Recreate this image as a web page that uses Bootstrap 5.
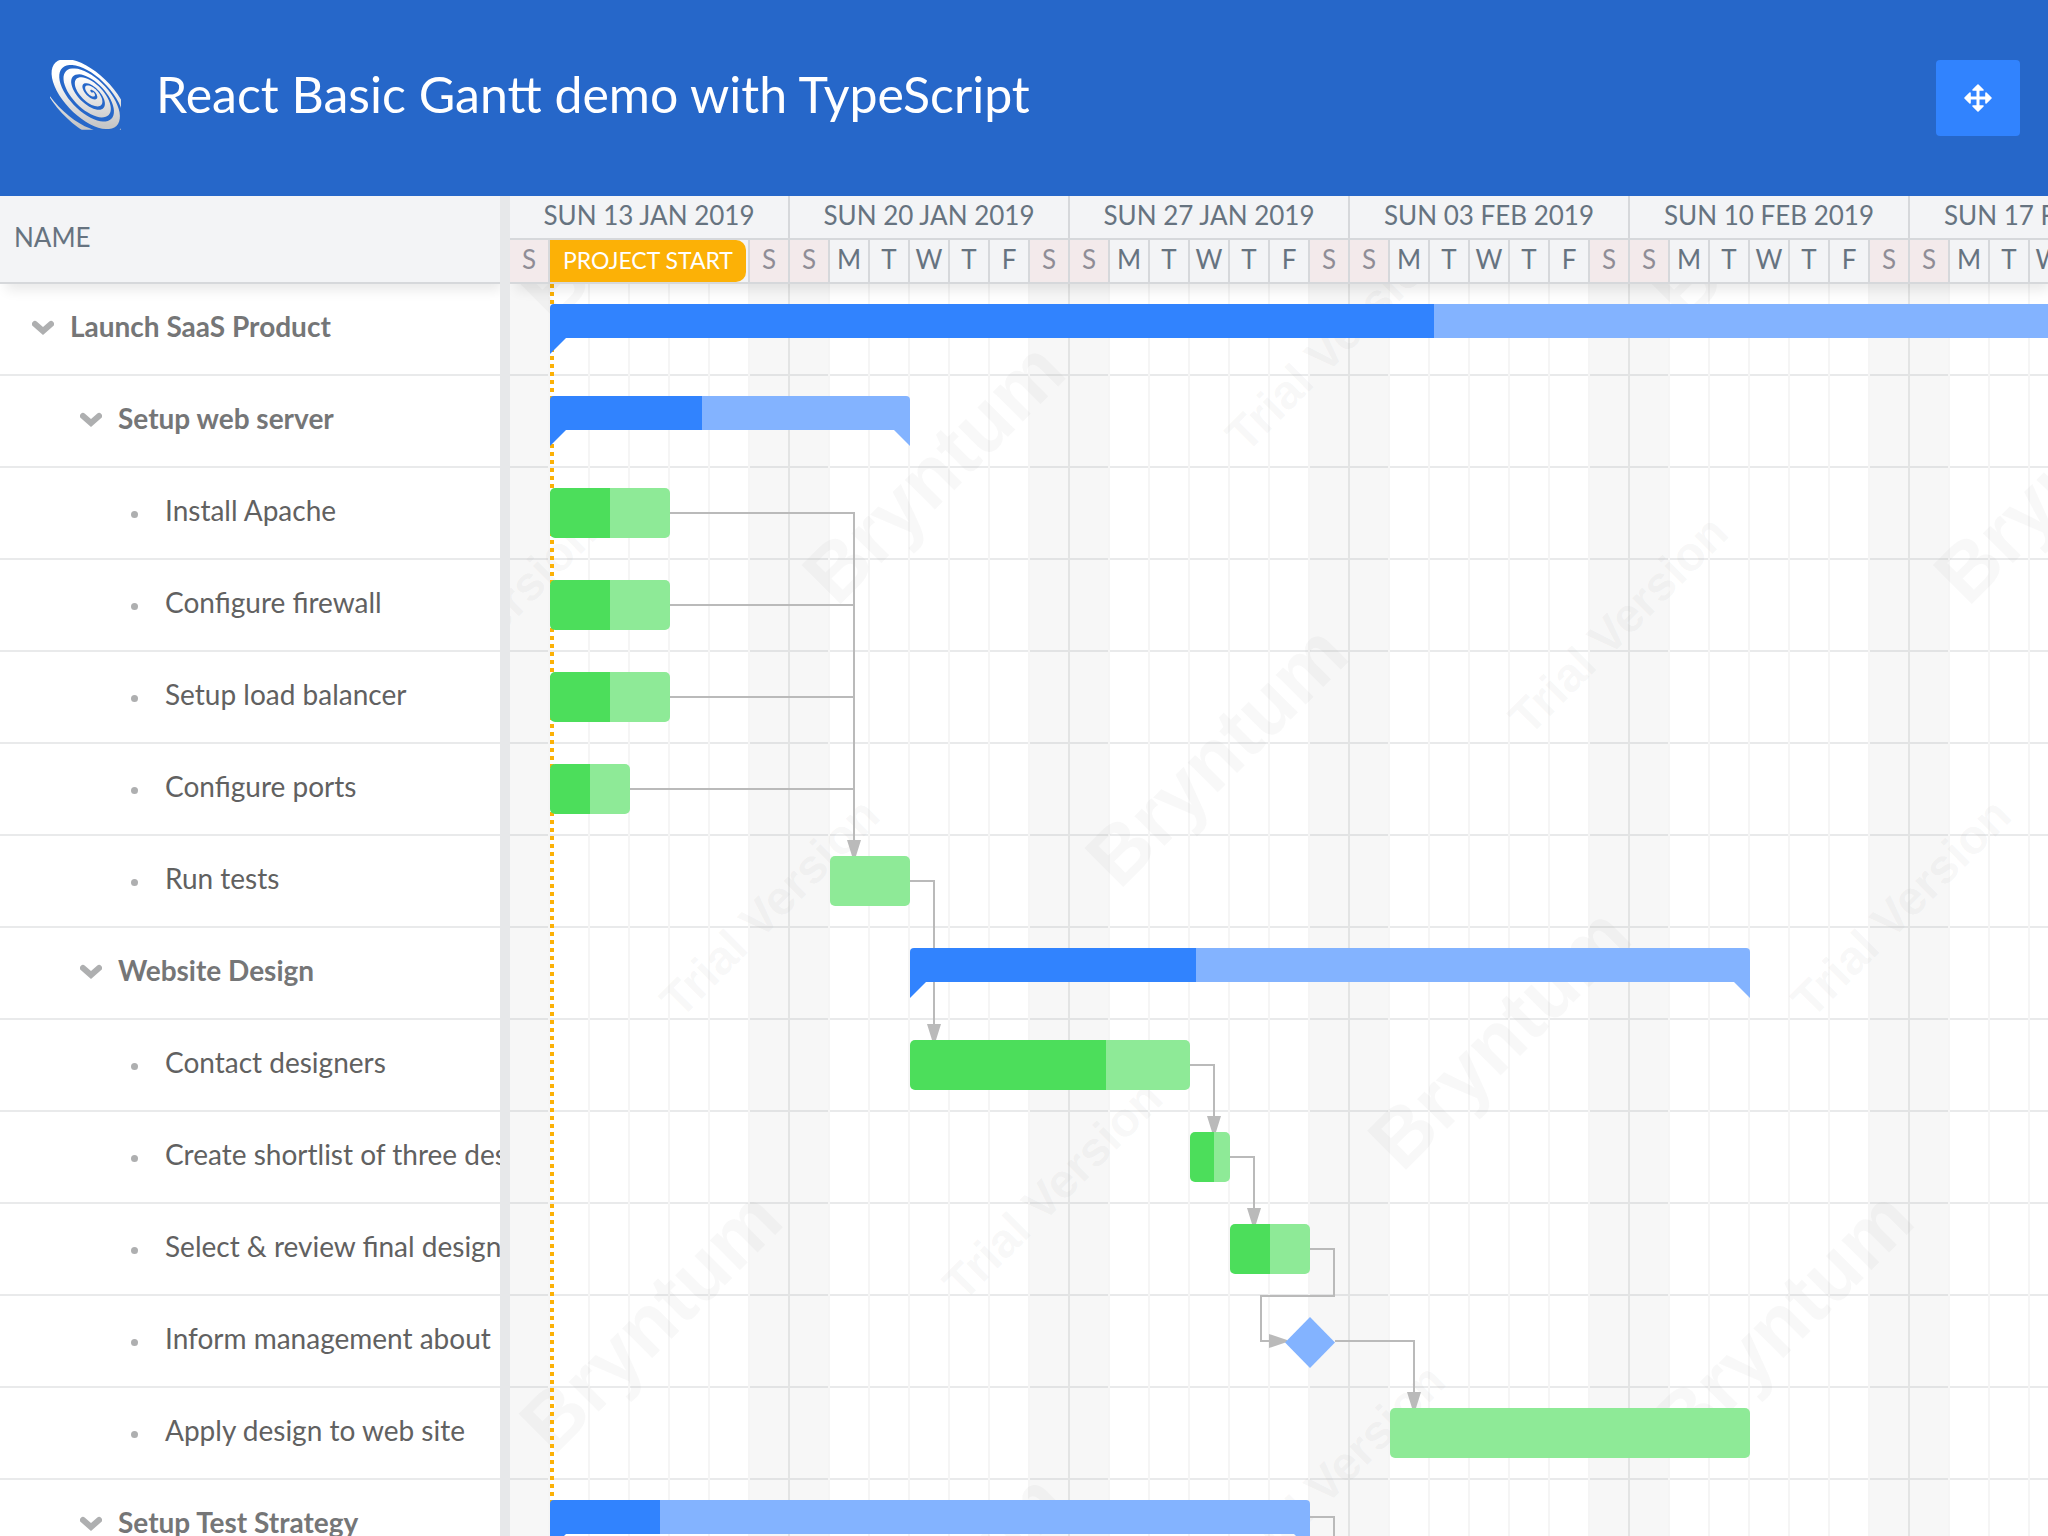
<!DOCTYPE html>
<html lang="en">
<head>
<meta charset="utf-8">
<meta name="viewport" content="width=device-width, initial-scale=1">
<title>React Basic Gantt demo with TypeScript</title>
<link href="https://cdn.jsdelivr.net/npm/bootstrap@5.3.0/dist/css/bootstrap.min.css" rel="stylesheet">
<style>
  :root { --day: 40px; --row: 92px; --line: #d6d8db; }
  body { font-family: Lato, "Liberation Sans", sans-serif; font-size: 28px; color: #616161; background: #fff; }
  .demo-header { height: 196px; background: #2667c9; padding: 0 28px 0 46px; }
  .demo-logo { width: 80px; height: 80px; }
  .demo-title { font-size: 50px; line-height: 60px; font-weight: 400; margin: 0 0 4px 30px; }
  .tool-btn { width: 84px; height: 76px; border-radius: 4px; background: #3183fe; border: 0; }
  .tool-btn svg { width: 28px; height: 28px; }

  .head-band { height: 88px; background: #f3f4f6; border-bottom: 2px solid var(--line); color: #667380; font-size: 26px; position: relative; z-index: 5; box-shadow: 4px 8px 12px -2px rgba(0,0,0,.09); }
  .name-col { width: 500px; }
  .name-head { padding: 0 14px 4px; }
  .tree-row { height: var(--row); border-bottom: 2px solid #e9eaeb; padding: 0 0 6px calc(32px + 48px * var(--level)); white-space: nowrap; overflow: hidden; }
  .tree-row .toggle { flex: none; width: 22px; height: 22px; padding: 0; border: 0; background: none; color: #aeafb0; margin: 6px 16px 0 0; line-height: 0; }
  .tree-row .bullet { flex: none; width: 22px; padding: 8px 0 0 3px; margin-right: 15px; }
  .tree-row .bullet i { display: block; width: 7px; height: 7px; border-radius: 50%; background: #aeafb0; }
  .parent-task { font-weight: 700; color: #757677; }
  .splitter { width: 10px; background: #e7e8ea; z-index: 6; }

  .weeks { height: 44px; border-bottom: 2px solid var(--line); }
  .week-cell { flex: 0 0 calc(var(--day) * 7); border-right: 2px solid var(--line); text-align: center; line-height: 38px; white-space: nowrap; }
  .days { height: 42px; position: relative; }
  .day-cell { flex: 0 0 var(--day); border-right: 2px solid var(--line); text-align: center; line-height: 38px; }
  .day-off { background: #f3eaeb; color: #8f8d96; }
  .project-label { position: absolute; left: var(--day); top: 0; width: 196px; height: 42px; line-height: 40px; border-radius: 0 10px 10px 0; background: #fcb106; color: #fff; font-size: 23px; text-align: center; }

  .grid-lines, .marks, .project-line { position: absolute; top: 0; bottom: 0; pointer-events: none; }
  .grid-lines { left: 0; right: 0;
    background:
      repeating-linear-gradient(90deg, transparent 0 278px, #e3e4e4 278px 280px),
      repeating-linear-gradient(90deg, transparent 0 38px, #f5f5f5 38px 40px),
      repeating-linear-gradient(90deg, rgba(0,0,0,.032) 0 40px, transparent 40px 238px, rgba(0,0,0,.032) 238px 280px); }
  .marks { left: 0; width: 100%; height: 100%; overflow: hidden; }
  .watermark { font-family: "Liberation Sans", Arial, sans-serif; font-weight: 700; fill: #969696; fill-opacity: .07; }
  .project-line { left: var(--day); width: 4px; background: repeating-linear-gradient(#fcb106 0 4px, transparent 4px 8px); }
  .task-row { height: var(--row); border-bottom: 2px solid #e9eaeb; padding-top: 20px; }
  .task-bar { position: relative; z-index: 3; margin-left: calc(var(--start) * var(--day)); width: calc(var(--days) * var(--day)); height: 50px; border-radius: 5px;
    background: linear-gradient(90deg, #4cde5b var(--done), #8eea97 var(--done)); }
  .task-bar.summary { height: 34px; border-radius: 4px 4px 0 0;
    background: linear-gradient(90deg, #3183fe var(--done), #83b3ff var(--done)); }
  .summary::before, .summary::after { content: ""; position: absolute; top: 34px; width: 16px; height: 16px; }
  .summary::before { left: 0; background: #3183fe; clip-path: polygon(0 0, 100% 0, 0 100%); }
  .summary::after { right: 0; background: #83b3ff; clip-path: polygon(0 0, 100% 0, 100% 100%); }
  .milestone { position: relative; z-index: 3; margin: 1px 0 0 calc(var(--start) * var(--day) - 25px); width: 50px; height: 51px; background: #83b3ff; clip-path: polygon(50% 0, 100% 50%, 50% 100%, 0 50%); }
</style>
<script src="https://cdn.jsdelivr.net/npm/bootstrap@5.3.0/dist/js/bootstrap.bundle.min.js"></script>
</head>
<body class="vh-100 d-flex flex-column overflow-hidden">

<header class="demo-header d-flex align-items-center text-white flex-shrink-0">
  <div class="d-flex align-items-center mb-1">
    <svg class="demo-logo" viewBox="0 0 240 240" role="img" aria-label="Bryntum">
      <defs>
        <linearGradient id="silver" gradientUnits="userSpaceOnUse" x1="0" y1="60" x2="0" y2="210"><stop offset="0" stop-color="#fff"/><stop offset="1" stop-color="#c6c6c6"/></linearGradient>
        <clipPath id="logoBox"><rect x="12" y="12" width="213" height="209"/></clipPath>
      </defs>
      <path id="spiral" fill="url(#silver)" clip-path="url(#logoBox)" d=""/>
    </svg>
    <h1 class="demo-title">React Basic Gantt demo with TypeScript</h1>
  </div>
  <button class="tool-btn ms-auto d-flex align-items-center justify-content-center" type="button" aria-label="Toggle fullscreen">
    <svg viewBox="0 0 28 28" fill="#fff" stroke="#fff" stroke-width="1.6" stroke-linejoin="round"><path d="M14 1 19 6H9zM14 27 19 22H9zM1 14 6 9V19zM27 14 22 9V19z"/><path d="M14 5V23M5 14H23" stroke-width="3"/></svg>
  </button>
</header>

<main class="d-flex flex-grow-1 overflow-hidden">
  <section class="name-col flex-shrink-0 overflow-hidden">
    <div class="head-band name-head d-flex align-items-center">NAME</div>
    <div class="tree-row parent-task d-flex align-items-center" style="--level:0"><button class="toggle" type="button" aria-label="Collapse"><svg width="22" height="22" viewBox="0 0 22 22" fill="none" stroke="currentColor" stroke-width="6" stroke-linecap="round"><path d="M3 6 11 13 19 6"/></svg></button><span>Launch SaaS Product</span></div>
    <div class="tree-row parent-task d-flex align-items-center" style="--level:1"><button class="toggle" type="button" aria-label="Collapse"><svg width="22" height="22" viewBox="0 0 22 22" fill="none" stroke="currentColor" stroke-width="6" stroke-linecap="round"><path d="M3 6 11 13 19 6"/></svg></button><span>Setup web server</span></div>
    <div class="tree-row d-flex align-items-center" style="--level:2"><span class="bullet"><i></i></span><span>Install Apache</span></div>
    <div class="tree-row d-flex align-items-center" style="--level:2"><span class="bullet"><i></i></span><span>Configure firewall</span></div>
    <div class="tree-row d-flex align-items-center" style="--level:2"><span class="bullet"><i></i></span><span>Setup load balancer</span></div>
    <div class="tree-row d-flex align-items-center" style="--level:2"><span class="bullet"><i></i></span><span>Configure ports</span></div>
    <div class="tree-row d-flex align-items-center" style="--level:2"><span class="bullet"><i></i></span><span>Run tests</span></div>
    <div class="tree-row parent-task d-flex align-items-center" style="--level:1"><button class="toggle" type="button" aria-label="Collapse"><svg width="22" height="22" viewBox="0 0 22 22" fill="none" stroke="currentColor" stroke-width="6" stroke-linecap="round"><path d="M3 6 11 13 19 6"/></svg></button><span>Website Design</span></div>
    <div class="tree-row d-flex align-items-center" style="--level:2"><span class="bullet"><i></i></span><span>Contact designers</span></div>
    <div class="tree-row d-flex align-items-center" style="--level:2"><span class="bullet"><i></i></span><span>Create shortlist of three des</span></div>
    <div class="tree-row d-flex align-items-center" style="--level:2"><span class="bullet"><i></i></span><span>Select &amp; review final design</span></div>
    <div class="tree-row d-flex align-items-center" style="--level:2"><span class="bullet"><i></i></span><span>Inform management about</span></div>
    <div class="tree-row d-flex align-items-center" style="--level:2"><span class="bullet"><i></i></span><span>Apply design to web site</span></div>
    <div class="tree-row parent-task d-flex align-items-center" style="--level:1"><button class="toggle" type="button" aria-label="Collapse"><svg width="22" height="22" viewBox="0 0 22 22" fill="none" stroke="currentColor" stroke-width="6" stroke-linecap="round"><path d="M3 6 11 13 19 6"/></svg></button><span>Setup Test Strategy</span></div>
  </section>

  <div class="splitter flex-shrink-0"></div>

  <section class="flex-grow-1 overflow-hidden">
    <div class="head-band">
      <div class="weeks d-flex">
        <div class="week-cell">SUN 13 JAN 2019</div><div class="week-cell">SUN 20 JAN 2019</div><div class="week-cell">SUN 27 JAN 2019</div><div class="week-cell">SUN 03 FEB 2019</div><div class="week-cell">SUN 10 FEB 2019</div><div class="week-cell">SUN 17 FEB 2019</div>
      </div>
      <div class="days d-flex">
        <div class="day-cell day-off">S</div><div class="day-cell"></div><div class="day-cell"></div><div class="day-cell"></div><div class="day-cell"></div><div class="day-cell"></div><div class="day-cell day-off">S</div>
        <div class="day-cell day-off">S</div><div class="day-cell">M</div><div class="day-cell">T</div><div class="day-cell">W</div><div class="day-cell">T</div><div class="day-cell">F</div><div class="day-cell day-off">S</div>
        <div class="day-cell day-off">S</div><div class="day-cell">M</div><div class="day-cell">T</div><div class="day-cell">W</div><div class="day-cell">T</div><div class="day-cell">F</div><div class="day-cell day-off">S</div>
        <div class="day-cell day-off">S</div><div class="day-cell">M</div><div class="day-cell">T</div><div class="day-cell">W</div><div class="day-cell">T</div><div class="day-cell">F</div><div class="day-cell day-off">S</div>
        <div class="day-cell day-off">S</div><div class="day-cell">M</div><div class="day-cell">T</div><div class="day-cell">W</div><div class="day-cell">T</div><div class="day-cell">F</div><div class="day-cell day-off">S</div>
        <div class="day-cell day-off">S</div><div class="day-cell">M</div><div class="day-cell">T</div><div class="day-cell">W</div>
        <div class="project-label">PROJECT START</div>
      </div>
    </div>

    <div class="position-relative overflow-hidden">
      <div class="task-row"><div class="task-bar summary" style="--start:1;--days:51;--done:884px"></div></div>
      <div class="task-row"><div class="task-bar summary" style="--start:1;--days:9;--done:152px"></div></div>
      <div class="task-row"><div class="task-bar" style="--start:1;--days:3;--done:50%"></div></div>
      <div class="task-row"><div class="task-bar" style="--start:1;--days:3;--done:50%"></div></div>
      <div class="task-row"><div class="task-bar" style="--start:1;--days:3;--done:50%"></div></div>
      <div class="task-row"><div class="task-bar" style="--start:1;--days:2;--done:50%"></div></div>
      <div class="task-row"><div class="task-bar" style="--start:8;--days:2;--done:0%"></div></div>
      <div class="task-row"><div class="task-bar summary" style="--start:10;--days:21;--done:286px"></div></div>
      <div class="task-row"><div class="task-bar" style="--start:10;--days:7;--done:70%"></div></div>
      <div class="task-row"><div class="task-bar" style="--start:17;--days:1;--done:60%"></div></div>
      <div class="task-row"><div class="task-bar" style="--start:18;--days:2;--done:50%"></div></div>
      <div class="task-row"><div class="milestone" style="--start:20"></div></div>
      <div class="task-row"><div class="task-bar" style="--start:22;--days:9;--done:0%"></div></div>
      <div class="task-row"><div class="task-bar summary" style="--start:1;--days:19;--done:110px"></div></div>

      <div class="grid-lines"></div>
      <svg class="marks">
        <g class="watermark" transform="rotate(-45)">
          <g font-size="80">
            <text x="-798" y="860">Bryntum</text><text x="-798" y="1260">Bryntum</text>
            <text x="2" y="60">Bryntum</text><text x="2" y="460">Bryntum</text><text x="2" y="860">Bryntum</text><text x="2" y="1260">Bryntum</text><text x="2" y="1660">Bryntum</text>
            <text x="802" y="860">Bryntum</text><text x="802" y="1260">Bryntum</text>
          </g>
          <g font-size="48">
            <text x="-400" y="241">Trial Version</text><text x="-400" y="641">Trial Version</text><text x="-400" y="1041">Trial Version</text><text x="-400" y="1441">Trial Version</text>
            <text x="400" y="641">Trial Version</text><text x="400" y="1041">Trial Version</text><text x="400" y="1441">Trial Version</text>
          </g>
        </g>
        <g fill="none" stroke="#bababa" stroke-width="2">
          <path d="M160 229H344V560M160 321H344M160 413H344M120 505H344"/>
          <path d="M400 597H424V742"/>
          <path d="M680 781H704V834"/>
          <path d="M720 873H744V926"/>
          <path d="M800 965H824V1012H751V1057H760"/>
          <path d="M825 1057H904V1110"/>
          <path d="M800 1233H824V1300"/>
        </g>
        <g fill="#bababa">
          <path d="M337 556H351L346 572H342zM417 740H431L426 756H422zM697 832H711L706 848H702zM737 924H751L746 940H742zM897 1108H911L906 1124H902z"/>
          <path d="M759 1050V1064L777 1058V1056z"/>
        </g>
      </svg>
      <div class="project-line"></div>
    </div>
  </section>
</main>

<script>
  // Logo: a spiral flattened along its diagonal axis and drifting towards the lower left as it grows.
  (function () {
    var cx = 140, cy = 109, turns = 4.8, full = 3.94, k = Math.SQRT1_2, outer = [], inner = [];
    function point(n, r) {
      var t = 2 * Math.PI * (n + 0.56);
      var u = r * Math.cos(t), v = 0.49 * r * Math.sin(t) + 0.14 * r;
      return (cx + (u - v) * k).toFixed(1) + ' ' + (cy + (u + v) * k).toFixed(1);
    }
    for (var n = 0.15; n <= turns; n += 0.02) {
      var r = 142 * Math.pow(n / full, 1.15);
      var w = 26 * Math.min(1, (turns - n) / 0.2, 0.4 + n / 3);
      outer.push(point(n, r));
      inner.unshift(point(n, Math.max(0, r - w)));
    }
    document.getElementById('spiral').setAttribute('d', 'M' + outer.concat(inner).join('L') + 'Z');
  })();
</script>
</body>
</html>
